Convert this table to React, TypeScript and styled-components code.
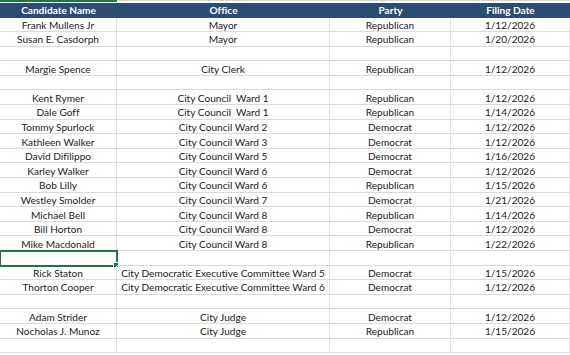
import styled, {createGlobalStyle} from "styled-components";

const GlobalStyle = createGlobalStyle`
  html, body {
    margin: 0;
    padding: 0;
    background: #ffffff;
    overflow: hidden;
  }
`;

type Filing = {
    name: string;
    office: string;
    party: string;
    date: string;
};

const blank: Filing = {name: "", office: "", party: "", date: ""};

const filings: Filing[] = [
    {name: "Frank Mullens Jr", office: "Mayor", party: "Republican", date: "1/12/2026"},
    {name: "Susan E. Casdorph", office: "Mayor", party: "Republican", date: "1/20/2026"},
    blank,
    {name: "Margie Spence", office: "City Clerk", party: "Republican", date: "1/12/2026"},
    blank,
    {name: "Kent Rymer", office: "City Council  Ward 1", party: "Republican", date: "1/12/2026"},
    {name: "Dale Goff", office: "City Council  Ward 1", party: "Republican", date: "1/14/2026"},
    {name: "Tommy Spurlock", office: "City Council Ward 2", party: "Democrat", date: "1/12/2026"},
    {name: "Kathleen Walker", office: "City Council Ward 3", party: "Democrat", date: "1/12/2026"},
    {name: "David Difilippo", office: "City Council Ward 5", party: "Democrat", date: "1/16/2026"},
    {name: "Karley Walker", office: "City Council Ward 6", party: "Democrat", date: "1/12/2026"},
    {name: "Bob Lilly", office: "City Council Ward 6", party: "Republican", date: "1/15/2026"},
    {name: "Westley Smolder", office: "City Council Ward 7", party: "Democrat", date: "1/21/2026"},
    {name: "Michael Bell", office: "City Council Ward 8", party: "Republican", date: "1/14/2026"},
    {name: "Bill Horton", office: "City Council Ward 8", party: "Democrat", date: "1/12/2026"},
    {name: "Mike Macdonald", office: "City Council Ward 8", party: "Republican", date: "1/22/2026"},
    blank,
    {name: "Rick Staton", office: "City Democratic Executive Committee Ward 5", party: "Democrat", date: "1/15/2026"},
    {name: "Thorton Cooper", office: "City Democratic Executive Committee Ward 6", party: "Democrat", date: "1/12/2026"},
    blank,
    {name: "Adam Strider", office: "City Judge", party: "Democrat", date: "1/12/2026"},
    {name: "Nocholas J. Munoz", office: "City Judge", party: "Republican", date: "1/15/2026"},
    blank,
];

const SELECTED_ROW = 16;

const Sheet = styled.div`
  display: grid;
  grid-template-columns: 117px 213px 121px 1fr;
  width: 570px;
  font-family: Lato, "Liberation Sans", sans-serif;
  font-size: 10.1px;
  color: #222222;
  font-variant-ligatures: none;
`;

const TopEdge = styled.div<{ $active?: boolean }>`
  height: 3px;
  box-sizing: border-box;
  border-top: ${props => props.$active ? "2px solid #217346" : "1px solid #d6d6d6"};
`;

const HeadCell = styled.div`
  height: 14.5px;
  display: flex;
  align-items: center;
  justify-content: center;
  background: #2c4c74;
  color: #ffffff;
  font-weight: bold;
`;

const Cell = styled.div<{ $selected?: boolean }>`
  position: relative;
  height: 14.6px;
  padding-top: 1px;
  box-sizing: border-box;
  display: flex;
  align-items: center;
  justify-content: center;
  white-space: pre;
  border-bottom: 1px solid #dadada;
  border-right: 1px solid #e2e2e2;
  outline: ${props => props.$selected ? "2px solid #217346" : "none"};
  outline-offset: -1px;
`;

const FillHandle = styled.span`
  position: absolute;
  right: -3px;
  bottom: -3px;
  width: 4px;
  height: 4px;
  background: #217346;
  border: 1px solid #ffffff;
`;

function App() {
    return (
        <>
            <GlobalStyle/>
            <Sheet>
                <TopEdge $active/>
                <TopEdge/>
                <TopEdge/>
                <TopEdge/>
                <HeadCell>Candidate Name</HeadCell>
                <HeadCell>Office</HeadCell>
                <HeadCell>Party</HeadCell>
                <HeadCell>Filing Date</HeadCell>
                {filings.map((f, i) => (
                    <Row key={i} filing={f} selected={i === SELECTED_ROW}/>
                ))}
            </Sheet>
        </>
    );
}

function Row({filing, selected}: { filing: Filing; selected: boolean }) {
    return (
        <>
            <Cell $selected={selected}>
                {filing.name}
                {selected && <FillHandle/>}
            </Cell>
            <Cell>{filing.office}</Cell>
            <Cell>{filing.party}</Cell>
            <Cell>{filing.date}</Cell>
        </>
    );
}

export default App;
